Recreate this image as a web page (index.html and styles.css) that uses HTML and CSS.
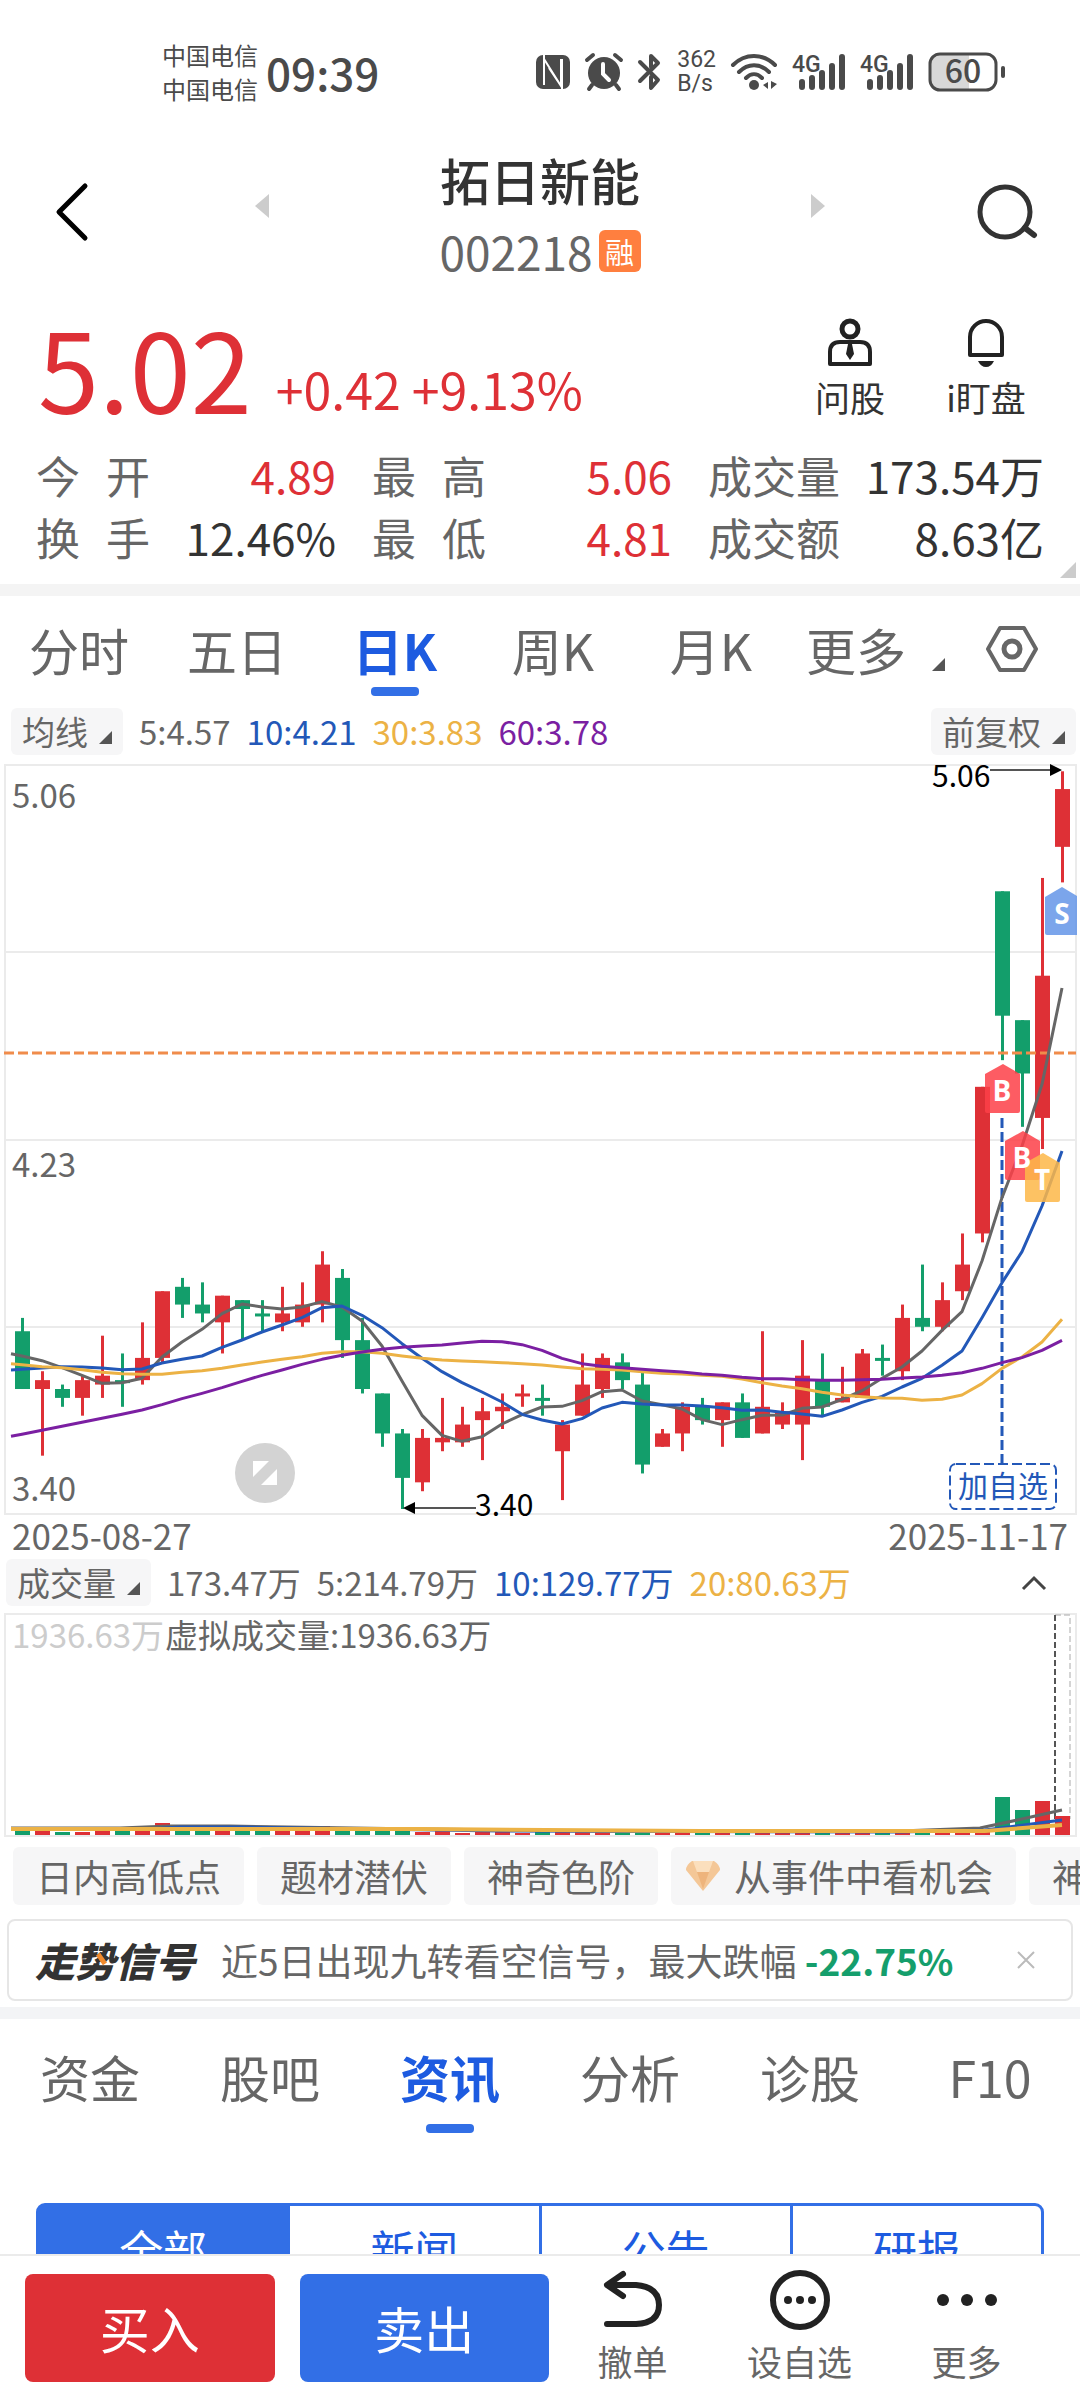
FILE: index.html
```
<!DOCTYPE html>
<html lang="zh-CN">
<head>
    <meta charset="UTF-8">
    <meta name="viewport" content="width=device-width, initial-scale=1.0">
    <title>拓日新能 002218</title>
    <link rel="stylesheet" href="styles.css">
</head>
<body>
    <div class="app">
        <div class="content">
            <div class="status">
                <div class="carrier">中国电信<br>中国电信</div>
                <div class="clock">09:39</div>
                <div class="status-icons">
                    <svg width="34" height="36" viewBox="0 0 34 36">
                        <rect x="0" y="1" width="34" height="34" rx="7" fill="#4a4a4a"/>
                        <path d="M8 1v30M8 5l17 27V5M13 14l12 18M26 35V5" fill="none" stroke="#fff" stroke-width="2"/>
                    </svg>
                    <svg width="38" height="38" viewBox="0 0 38 38">
                        <circle cx="19" cy="20" r="16" fill="#4a4a4a"/>
                        <path d="M2 7l6-5M36 7l-6-5M7 32l-3 4M31 32l3 4" stroke="#4a4a4a" stroke-width="4" stroke-linecap="round"/>
                        <path d="M18 11v10l6 6" fill="none" stroke="#fff" stroke-width="4" stroke-linecap="round"/>
                    </svg>
                    <svg width="24" height="38" viewBox="0 0 24 38">
                        <path d="M2 9l18 18-7 8V24M13 14V3l7 7L2 28" fill="none" stroke="#4a4a4a" stroke-width="4" stroke-linecap="round" stroke-linejoin="round"/>
                    </svg>
                    <div class="speed">362<br>B/s</div>
                    <svg width="46" height="38" viewBox="0 0 46 38">
                        <path d="M2 12C14 0 32 0 44 12M8 19c9-9 21-9 30 0M15 25c5-5 11-5 16 0" fill="none" stroke="#4a4a4a" stroke-width="4" stroke-linecap="round"/>
                        <circle cx="23" cy="32" r="5" fill="#4a4a4a"/>
                        <path d="M37 29v7l-5-4zM40 28v8l6-5z" fill="#4a4a4a"/>
                    </svg>
                    <svg class="signal" width="53" height="38" viewBox="0 0 53 38">
                        <text x="0" y="19">4G</text>
                        <path d="M10 29v5M20 25v9M30 20v14M40 13v21M50 4v30"/>
                    </svg>
                    <svg class="signal" width="53" height="38" viewBox="0 0 53 38">
                        <text x="0" y="19">4G</text>
                        <path d="M10 29v5M20 25v9M30 20v14M40 13v21M50 4v30"/>
                    </svg>
                    <svg width="77" height="40" viewBox="0 0 77 40">
                        <rect x="2" y="2" width="66" height="36" rx="10" fill="#fff"/>
                        <path d="M12 2h29v36H12A10 10 0 0 1 2 28V12A10 10 0 0 1 12 2z" fill="#d8d8d8"/>
                        <rect x="2" y="2" width="66" height="36" rx="10" fill="none" stroke="#4a4a4a" stroke-width="3"/>
                        <path d="M75 16v8" stroke="#4a4a4a" stroke-width="4" stroke-linecap="round"/>
                        <text class="battery-text" x="35" y="31">60</text>
                    </svg>
                </div>
            </div>

            <header class="header">
                <button type="button" class="icon-btn" aria-label="返回">
                    <svg width="64" height="60" viewBox="0 0 64 60"><path d="M45 4L19 30l26 26" fill="none" stroke="#000" stroke-width="5" stroke-linecap="round" stroke-linejoin="round"/></svg>
                </button>
                <button type="button" class="step" aria-label="上一只">
                    <svg width="14" height="24" viewBox="0 0 14 24"><path d="M14 0v24L0 12z" fill="#ccc"/></svg>
                </button>
                <div class="title">
                    <h1>拓日新能</h1>
                    <div class="code">002218<span class="tag">融</span></div>
                </div>
                <button type="button" class="step" aria-label="下一只">
                    <svg width="14" height="24" viewBox="0 0 14 24"><path d="M0 0v24l14-12z" fill="#ccc"/></svg>
                </button>
                <button type="button" class="icon-btn" aria-label="搜索">
                    <svg width="64" height="60" viewBox="0 0 64 60"><circle cx="29" cy="30" r="25" fill="none" stroke="#333" stroke-width="5"/><path d="M49 46l9 7" stroke="#333" stroke-width="6" stroke-linecap="round"/></svg>
                </button>
            </header>

            <section class="quote">
                <span class="price">5.02</span>
                <span class="change">+0.42 +9.13%</span>
                <button type="button" class="ask">
                    <svg width="50" height="50" viewBox="0 0 50 50">
                        <circle cx="25" cy="11" r="8" fill="none" stroke="#222" stroke-width="5"/>
                        <path d="M5 46V34q0-10 10-10h20q10 0 10 10v12z" fill="none" stroke="#222" stroke-width="4" stroke-linejoin="round"/>
                        <path d="M23 26h4l2 10-4 6-4-6z" fill="#222"/>
                    </svg>
                    问股
                </button>
                <button type="button" class="ask">
                    <svg width="50" height="50" viewBox="0 0 50 50">
                        <path d="M9 37V19a16 16 0 0 1 32 0v18z" fill="none" stroke="#222" stroke-width="4" stroke-linejoin="round"/>
                        <path d="M17 43h16q-3 6-8 6t-8-6z" fill="#222"/>
                    </svg>
                    i盯盘
                </button>
            </section>

            <dl class="stats">
                <div><dt><span>今</span><span>开</span></dt><dd class="up">4.89</dd></div>
                <div><dt><span>最</span><span>高</span></dt><dd class="up">5.06</dd></div>
                <div><dt>成交量</dt><dd>173.54万</dd></div>
                <div><dt><span>换</span><span>手</span></dt><dd>12.46%</dd></div>
                <div><dt><span>最</span><span>低</span></dt><dd class="up">4.81</dd></div>
                <div><dt>成交额</dt><dd>8.63亿</dd></div>
            </dl>

            <nav class="period">
                <button type="button">分时</button>
                <button type="button">五日</button>
                <button type="button" class="active">日K</button>
                <button type="button">周K</button>
                <button type="button">月K</button>
                <button type="button" class="more">更多<i class="corner"></i></button>
                <button type="button" class="gear" aria-label="设置">
                    <svg width="52" height="48" viewBox="0 0 52 48"><path d="M14 3h24l12 21-12 21H14L2 24z" fill="none" stroke="#666" stroke-width="4" stroke-linejoin="round"/><circle cx="26" cy="24" r="8" fill="none" stroke="#666" stroke-width="5"/></svg>
                </button>
            </nav>

            <div class="legend">
                <label class="picker"><select aria-label="指标"><option>均线</option></select><i class="corner"></i></label>
                <span class="ma5">5:4.57</span>
                <span class="ma10">10:4.21</span>
                <span class="ma30">30:3.83</span>
                <span class="ma60">60:3.78</span>
                <label class="picker right"><select aria-label="复权"><option>前复权</option></select><i class="corner"></i></label>
            </div>

            <svg class="chart" viewBox="0 0 1080 756">
                <path d="M5 4h1071v749H5zM5 191h1071M5 379h1071M5 566h1071" fill="none" stroke="#ebebeb" stroke-width="2"/>
                <g id="candles"></g>
                <path d="M4 292h1072" stroke="#f08c4b" stroke-width="3" stroke-dasharray="10 4"/>
                <path d="M1002 357v346" stroke="#2358b8" stroke-width="3" stroke-dasharray="10 4"/>
                <g id="averages"></g>
                <g class="badges">
                    <path d="M1045 136l17-10 15 9v39h-30q-2 0-2-2z" fill="#6495e8"/>
                    <path d="M985 313l18-10 17 10v37q0 2-2 2h-31q-2 0-2-2z" fill="#fd4048"/>
                    <path d="M1005 380l18-10 17 10v37q0 2-2 2h-31q-2 0-2-2z" fill="#fd4048"/>
                    <path d="M1025 402l18-10 17 10v37q0 2-2 2h-31q-2 0-2-2z" fill="#fdb748"/>
                    <text x="1062" y="163">S</text>
                    <text x="1002" y="340">B</text>
                    <text x="1022" y="407">B</text>
                    <text x="1042" y="429">T</text>
                </g>
                <rect x="950" y="703" width="106" height="45" rx="6" fill="#fff" stroke="#2358b8" stroke-width="2" stroke-dasharray="10 4"/>
                <text x="1003" y="736" class="watch">加自选</text>
                <text x="12" y="47" class="axis">5.06</text>
                <text x="12" y="416" class="axis">4.23</text>
                <text x="12" y="740" class="axis">3.40</text>
                <path d="M990 9h62M414 747h62" stroke="#555" stroke-width="2"/>
                <path d="M1050 3l12 6-12 6zM415 741l-12 6 12 6z"/>
                <text x="932" y="26" class="peak">5.06</text>
                <text x="475" y="755" class="peak">3.40</text>
                <circle cx="265" cy="712" r="30" fill="#d3d3d3"/>
                <path d="M253 700h16l-16 16zM277 708v16h-16z" fill="#fff"/>
            </svg>

            <div class="dates"><span>2025-08-27</span><span>2025-11-17</span></div>

            <div class="legend volume-legend">
                <label class="picker"><select aria-label="副图"><option>成交量</option></select><i class="corner"></i></label>
                <span>173.47万</span>
                <span>5:214.79万</span>
                <span class="ma10">10:129.77万</span>
                <span class="ma30">20:80.63万</span>
                <button type="button" class="right" aria-label="收起">
                    <svg width="28" height="16" viewBox="0 0 28 16"><path d="M3 14L14 3l11 11" fill="none" stroke="#444" stroke-width="3"/></svg>
                </button>
            </div>

            <svg class="chart" viewBox="0 0 1080 226">
                <path d="M5 2h1071v222H5z" fill="none" stroke="#ebebeb" stroke-width="2"/>
                <text x="12" y="36" class="axis faint">1936.63万</text>
                <text x="165" y="36" class="axis">虚拟成交量:1936.63万</text>
                <path d="M1055 3h15v204" fill="none" stroke="#aaa" stroke-width="1" stroke-dasharray="6 3"/>
                <path d="M1055 207V3" stroke="#555" stroke-width="2" stroke-dasharray="6 3"/>
                <g id="volumes"></g>
                <g fill="none" stroke-width="3">
                    <path d="M11 216H120L170 214 230 214 420 217 600 219 900 219 980 216 1022 207 1062 198" stroke="#666"/>
                    <path d="M11 217H150L180 215 240 215 500 219 900 220 985 218 1062 208" stroke="#2358b8"/>
                    <path d="M11 217H300L420 217 700 219 985 219 1062 213" stroke="#ecb245" stroke-width="4"/>
                </g>
            </svg>

            <div class="chips">
                <a href="#">日内高低点</a>
                <a href="#">题材潜伏</a>
                <a href="#">神奇色阶</a>
                <a href="#" class="with-icon">
                    <svg width="34" height="30" viewBox="0 0 34 30"><path d="M6 0h22q6 4 6 9L17 30 0 9q0-5 6-9z" fill="#f4c797"/><path d="M7 0h20l-4 11H11z" fill="#fbdfbd"/><path d="M11 11h12l-6 17z" fill="#eeb47c"/></svg>
                    从事件中看机会
                </a>
                <a href="#">神奇九转</a>
            </div>

            <div class="signal-card">
                <strong class="logo">走势信号</strong>
                <span>近5日出现九转看空信号，最大跌幅 <b>-22.75%</b></span>
                <button type="button" class="right" aria-label="关闭">
                    <svg width="18" height="18" viewBox="0 0 18 18"><path d="M1 1l16 16M17 1L1 17" stroke="#bbb" stroke-width="2"/></svg>
                </button>
            </div>

            <nav class="sections">
                <a href="#">资金</a>
                <a href="#">股吧</a>
                <a href="#" class="active">资讯</a>
                <a href="#">分析</a>
                <a href="#">诊股</a>
                <a href="#">F10</a>
            </nav>

            <div class="filter">
                <button type="button" class="active">全部</button>
                <button type="button">新闻</button>
                <button type="button">公告</button>
                <button type="button">研报</button>
            </div>
        </div>

        <footer class="bottom">
            <div class="trade">
                <button type="button" class="buy">买入</button>
                <button type="button" class="sell">卖出</button>
            </div>
            <div class="tools">
                <button type="button">
                    <svg width="62" height="62" viewBox="0 0 62 62"><path d="M21 5L5 16l16 11M6 16h28q23 2 23 20T34 55H5" fill="none" stroke="#222" stroke-width="6" stroke-linecap="round" stroke-linejoin="round"/></svg>
                    撤单
                </button>
                <button type="button">
                    <svg width="62" height="62" viewBox="0 0 62 62"><circle cx="31" cy="31" r="27" fill="none" stroke="#222" stroke-width="6"/><circle cx="19" cy="31" r="4"/><circle cx="31" cy="31" r="4"/><circle cx="43" cy="31" r="4"/></svg>
                    设自选
                </button>
                <button type="button">
                    <svg width="62" height="62" viewBox="0 0 62 62"><circle cx="7" cy="31" r="6"/><circle cx="31" cy="31" r="6"/><circle cx="55" cy="31" r="6"/></svg>
                    更多
                </button>
            </div>
        </footer>
    </div>
    <script src="chart.js"></script>
</body>
</html>
```
FILE: styles.css
```
* {
    box-sizing: border-box;
}

body {
    margin: 0;
    background: #fff;
    color: #333;
    font-family: "Noto Sans CJK SC", "Noto Sans", sans-serif;
}

button {
    padding: 0;
    border: none;
    background: none;
    color: inherit;
    font: inherit;
    cursor: pointer;
}

a {
    color: inherit;
    text-decoration: none;
}

svg {
    display: block;
    flex-shrink: 0;
    overflow: visible;
}

.app {
    display: flex;
    flex-direction: column;
    height: 100vh;
}

.content {
    flex: 1;
    min-height: 0;
    overflow: hidden;
}

/* status bar */
.status {
    display: flex;
    align-items: center;
    height: 144px;
    padding: 0 75px 0 162px;
    color: #4a4a4a;
}

.carrier {
    font-size: 24px;
    line-height: 34px;
}

.clock {
    margin-left: 8px;
    font-size: 44px;
    font-weight: 500;
    line-height: 60px;
}

.status-icons {
    display: flex;
    align-items: center;
    gap: 15px;
    margin-left: auto;
}

.speed {
    font-family: Roboto, sans-serif;
    font-size: 23px;
    line-height: 24px;
}

.signal text {
    font: 500 23px Roboto, sans-serif;
    fill: #4a4a4a;
}

.signal path {
    stroke: #4a4a4a;
    stroke-width: 6;
    stroke-linecap: round;
}

.battery-text {
    font-size: 32px;
    font-weight: 500;
    fill: #4a4a4a;
    text-anchor: middle;
}

/* header */
.header {
    display: flex;
    align-items: center;
    justify-content: space-between;
    height: 136px;
    padding: 0 40px;
}

.step {
    padding-bottom: 12px;
}

.title {
    width: 240px;
    padding-top: 6px;
    text-align: center;
}

h1 {
    margin: 0;
    font-size: 50px;
    font-weight: 500;
    line-height: 72px;
}

.code {
    display: flex;
    align-items: center;
    justify-content: center;
    gap: 6px;
    color: #666;
    font-size: 46px;
    line-height: 72px;
}

.tag {
    width: 42px;
    border-radius: 6px;
    background: #ff7f3f;
    color: #fff;
    font-size: 29px;
    line-height: 42px;
}

/* quote */
.quote {
    display: flex;
    align-items: flex-end;
    height: 146px;
    padding: 0 26px 0 38px;
    color: #de3036;
}

.price {
    font-size: 110px;
    line-height: 120px;
}

.change {
    margin: 0 auto 0 24px;
    font-size: 50px;
    line-height: 76px;
}

.ask {
    width: 136px;
    color: #333;
    font-size: 35px;
    line-height: 58px;
}

.ask svg {
    margin: 0 auto;
}

.stats {
    display: grid;
    grid-template-columns: 300fr 300fr 336fr;
    column-gap: 36px;
    margin: 0;
    padding: 18px 36px 16px;
    border-bottom: 12px solid #f4f4f4;
    font-size: 44px;
    line-height: 62px;
    position: relative;
}

.stats::after {
    content: "";
    position: absolute;
    right: 4px;
    bottom: 6px;
    border-left: 16px solid transparent;
    border-bottom: 16px solid #ccc;
}

.stats div {
    display: flex;
    justify-content: space-between;
}

.stats dt {
    display: flex;
    gap: 26px;
    color: #666;
}

.stats dd {
    margin: 0;
}

.stats .up {
    color: #de3036;
}

/* chart tabs */
.period {
    display: grid;
    grid-template-columns: repeat(5, 158fr) 174fr 116fr;
    height: 112px;
    color: #666;
    font-size: 50px;
    line-height: 72px;
}

.period button {
    padding-bottom: 6px;
}

.period .more {
    display: flex;
    align-items: center;
    gap: 26px;
    padding-left: 16px;
    white-space: nowrap;
}

.more .corner {
    margin-top: 30px;
}

.period .gear {
    padding-left: 22px;
}

.active {
    color: #1d5be0;
    font-weight: 700;
    position: relative;
}

.period .active::after,
.sections .active::after {
    content: "";
    position: absolute;
    left: 50%;
    bottom: 12px;
    width: 48px;
    height: 9px;
    margin-left: -24px;
    border-radius: 4px;
    background: #326fe6;
}

.corner {
    border-left: 13px solid transparent;
    border-bottom: 13px solid #555;
}

.legend {
    display: flex;
    align-items: center;
    gap: 16px;
    height: 53px;
    padding: 0 4px 6px 11px;
    color: #666;
    font-size: 33px;
    line-height: 47px;
}

.picker {
    display: flex;
    align-items: center;
    gap: 11px;
    padding: 0 11px;
    border-radius: 6px;
    background: #f6f6f7;
}

.picker select {
    height: 47px;
    padding: 0;
    border: none;
    appearance: none;
    background: none;
    color: inherit;
    font: inherit;
}

.picker .corner {
    margin-top: 12px;
}

.right {
    margin-left: auto;
}

.ma10 {
    color: #2358b8;
}

.ma30 {
    color: #ecb245;
}

.ma60 {
    color: #7b1fa2;
}

.chart {
    width: 100%;
    height: auto;
}

.axis {
    font-size: 33px;
    fill: #666;
}

.faint {
    fill: #ccc;
}

.peak {
    font-size: 30px;
    fill: #000;
}

.watch {
    font-size: 30px;
    fill: #2358b8;
    text-anchor: middle;
}

.badges path {
    opacity: 0.85;
}

.badges text {
    font: 700 28px "Open Sans", sans-serif;
    fill: #fff;
    text-anchor: middle;
}

.dates {
    display: flex;
    justify-content: space-between;
    padding: 0 12px;
    color: #666;
    font-size: 35px;
    line-height: 36px;
}

.volume-legend {
    margin-top: 6px;
    padding: 0 32px 6px 6px;
}

/* chips */
.chips {
    display: flex;
    gap: 13px;
    overflow: hidden;
    margin-top: 9px;
    padding-left: 13px;
    color: #666;
    font-size: 37px;
    line-height: 58px;
    white-space: nowrap;
}

.chips a {
    flex-shrink: 0;
    padding: 0 23px;
    border-radius: 6px;
    background: #f6f6f7;
}

.chips .with-icon {
    display: flex;
    align-items: center;
    gap: 14px;
    padding-left: 15px;
}

.signal-card {
    display: flex;
    align-items: center;
    height: 82px;
    margin: 14px 7px 6px;
    padding: 0 36px 0 26px;
    border: 2px solid #e6e6e6;
    border-radius: 8px;
    color: #666;
    font-size: 37px;
    white-space: nowrap;
}

.signal-card b {
    color: #159e6c;
}

.logo {
    margin-right: 26px;
    color: #333;
    font-size: 40px;
    font-weight: 900;
    font-style: italic;
    position: relative;
}

/* orange stroke of the logo */
.logo::after {
    content: "";
    position: absolute;
    left: 64px;
    top: 22px;
    width: 5px;
    height: 12px;
    background: #f08a2c;
    transform: rotate(-35deg);
}

/* section tabs */
.sections {
    display: flex;
    height: 138px;
    border-top: 12px solid #f3f4f6;
    color: #666;
    font-size: 50px;
    line-height: 114px;
}

.sections a {
    flex: 1;
    text-align: center;
}

.filter {
    display: flex;
    height: 92px;
    margin: 58px 36px 0;
    border: 3px solid #326fe6;
    border-radius: 9px;
    color: #1d5be0;
    font-size: 44px;
}

.filter button {
    flex: 1;
}

.filter button + button {
    border-left: 3px solid #326fe6;
}

.filter .active {
    background: #326fe6;
    color: #fff;
    font-weight: 400;
}

/* bottom bar */
.bottom {
    display: flex;
    height: 146px;
    padding: 0 30px 0 25px;
    border-top: 2px solid #ebebeb;
    background: #fff;
}

.trade {
    display: flex;
    flex: 524;
    gap: 25px;
    padding: 18px 0;
    color: #fff;
    font-size: 50px;
}

.trade button {
    flex: 1;
    padding-bottom: 2px;
    border-radius: 8px;
}

.buy {
    background: #de3036;
}

.sell {
    background: #326fe6;
}

.tools {
    display: flex;
    flex: 501;
    color: #666;
    font-size: 35px;
    line-height: 60px;
}

.tools button {
    flex: 1;
    padding-top: 4px;
}

.tools svg {
    margin: 0 auto;
    fill: #222;
}
```
FILE: chart.js
```
// [direction, high, body top, body bottom, low], in cents over 3.40
const candles = [
    ['g', 43, 40, 27, 27], ['r', 31, 29, 27, 12], ['g', 28, 27, 25, 23], ['r', 30, 29, 25, 21],
    ['r', 39, 30, 28, 25], ['g', 35, 29, 29, 23], ['r', 42, 34, 29, 28], ['r', 49, 49, 34, 33],
    ['g', 52, 50, 46, 43], ['g', 51, 46, 44, 42], ['r', 48, 48, 42, 35], ['g', 47, 47, 45, 38],
    ['g', 47, 44, 44, 40], ['r', 50, 44, 42, 40], ['r', 51, 46, 42, 41], ['r', 58, 55, 46, 42],
    ['g', 54, 52, 38, 34], ['g', 43, 38, 27, 26], ['g', 26, 26, 17, 14], ['g', 18, 17, 7, 0],
    ['r', 18, 16, 6, 4], ['r', 25, 16, 15, 13], ['r', 23, 19, 15, 14], ['r', 25, 22, 20, 11],
    ['r', 26, 23, 22, 18], ['r', 28, 26, 26, 23], ['g', 28, 25, 25, 21], ['r', 20, 19, 13, 2],
    ['r', 35, 28, 21, 21], ['r', 35, 34, 27, 25], ['g', 35, 33, 29, 27], ['g', 31, 28, 10, 8],
    ['r', 18, 17, 14, 14], ['r', 24, 23, 17, 13], ['g', 25, 23, 20, 19], ['r', 24, 24, 20, 14],
    ['g', 26, 24, 16, 16], ['r', 40, 23, 17, 17], ['r', 24, 22, 19, 18], ['r', 38, 30, 19, 11],
    ['g', 35, 29, 23, 21], ['r', 32, 25, 24, 24], ['r', 36, 35, 25, 25], ['g', 37, 34, 34, 30],
    ['r', 46, 43, 31, 29], ['g', 55, 43, 41, 40], ['r', 51, 47, 41, 40], ['r', 62, 55, 49, 47],
    ['r', 95, 95, 62, 60], ['g', 139, 139, 111, 101], ['g', 110, 110, 98, 86], ['r', 142, 120, 88, 81],
    ['r', 166, 162, 149, 141]
];

// line heights, three units to a pixel, counted from y = 420
const averages = [
    ['#666', [525, 539, 560, 583, 607, 605, 592, 528, 483, 445, 398, 369, 378, 384, 378, 362, 378, 420, 495, 600, 703, 763, 781, 767, 729, 701, 678, 676, 659, 632, 627, 660, 671, 684, 716, 731, 716, 703, 702, 682, 678, 655, 629, 592, 558, 510, 448, 392, 240, 50, -105, -290, -579]],
    ['#2358b8', [565, 561, 557, 558, 561, 566, 564, 546, 535, 525, 499, 477, 453, 432, 410, 380, 375, 403, 440, 488, 532, 572, 605, 633, 663, 700, 717, 729, 713, 681, 664, 669, 672, 672, 675, 680, 688, 687, 694, 699, 706, 687, 664, 646, 618, 592, 553, 510, 410, 305, 212, 75, -90]],
    ['#ecb245', [551, 557, 560, 566, 574, 578, 580, 580, 574, 569, 562, 552, 543, 535, 527, 517, 512, 512, 517, 525, 532, 537, 540, 542, 545, 548, 552, 558, 563, 565, 567, 572, 577, 579, 583, 586, 594, 605, 615, 623, 634, 642, 647, 651, 652, 658, 655, 642, 608, 562, 528, 483, 415]],
    ['#7b1fa2', [760, 748, 736, 724, 712, 700, 687, 671, 653, 637, 620, 601, 583, 567, 550, 535, 523, 513, 505, 499, 495, 492, 486, 481, 482, 491, 508, 532, 548, 556, 560, 565, 569, 573, 579, 583, 589, 593, 593, 596, 598, 598, 596, 595, 591, 588, 583, 575, 562, 545, 530, 508, 478]]
];

const volumes = [4, 4, 3, 3, 4, 4, 6, 12, 5, 5, 5, 4, 4, 5, 5, 9, 5, 5, 5, 5, 3, 4, 2, 3, 3, 2, 3, 3, 3, 3, 4, 3, 3, 3, 3, 2, 2, 3, 3, 6, 4, 3, 3, 3, 4, 4, 4, 7, 5, 38, 25, 34, 19];

const colors = { r: '#de3036', g: '#139e6b' };
const x = i => 22 + i * 20;
const y = cents => 748 - cents * 4.444;

document.getElementById('candles').innerHTML = candles.map(([dir, high, top, bottom, low], i) => {
    // an unchanged day is drawn as a thin bar
    const height = Math.max((top - bottom) * 4.444, 3);
    return `<g fill="${colors[dir]}"><rect x="${x(i) - 1}" y="${y(high)}" width="3" height="${y(low) - y(high)}"/>` +
        `<rect x="${x(i) - 7}" y="${y(top)}" width="15" height="${height}"/></g>`;
}).join('');

document.getElementById('averages').innerHTML = averages.map(([color, values]) => {
    const points = values.map((v, i) => [x(i), 420 + v / 3]);
    const start = [11, points[0][1] * 1.5 - points[1][1] * 0.5];
    const line = [start, ...points].map(p => p.join(',')).join(' ');
    return `<polyline points="${line}" fill="none" stroke="${color}" stroke-width="3" stroke-linejoin="round"/>`;
}).join('');

document.getElementById('volumes').innerHTML = volumes.map((v, i) =>
    `<rect x="${x(i) - 7}" y="${223 - v}" width="15" height="${v}" fill="${colors[candles[i][0]]}"/>`
).join('');
```
